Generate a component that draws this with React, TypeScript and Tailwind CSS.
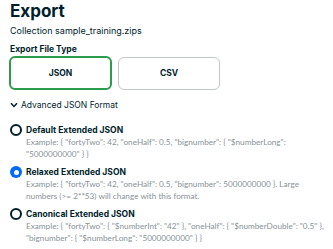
import { useState } from 'react';

type Format = 'default' | 'relaxed' | 'canonical';

const formats: { id: Format; label: string; example: string }[] = [
  {
    id: 'default',
    label: 'Default Extended JSON',
    example: 'Example: { "fortyTwo": 42, "oneHalf": 0.5, "bignumber": { "$numberLong": "5000000000" } }',
  },
  {
    id: 'relaxed',
    label: 'Relaxed Extended JSON',
    example:
      'Example: { "fortyTwo": 42, "oneHalf": 0.5, "bignumber": 5000000000 }. Large numbers (>= 2**53) will change with this format.',
  },
  {
    id: 'canonical',
    label: 'Canonical Extended JSON',
    example:
      'Example: { "fortyTwo": { "$numberInt": "42" }, "oneHalf": { "$numberDouble": "0.5" }, "bignumber": { "$numberLong": "5000000000" } }',
  },
];

const App = () => {
  const [fileType, setFileType] = useState<'json' | 'csv'>('json');
  const [format, setFormat] = useState<Format>('relaxed');

  return (
    <div className="w-[333px] h-[249px] overflow-hidden bg-white text-[#001e2b] font-['Inter',sans-serif] pl-[10px] pr-[5px]">
      {/* Title */}
      <h1 className="text-[17px] font-bold leading-[20px] pt-[1px]">Export</h1>
      <p className="text-[9px] leading-[12px] mt-[4px]">Collection sample_training.zips</p>

      {/* File type */}
      <p className="text-[8.5px] font-bold leading-[12px] mt-[6px]">Export File Type</p>
      <div className="flex gap-[6px] mt-[1px] -ml-[1px]">
        <button
          onClick={() => setFileType('json')}
          className={`w-[103px] h-[34px] rounded-[6px] text-[8.5px] font-bold ${
            fileType === 'json' ? 'border-2 border-[#2d9b4c]' : 'border border-[#c1c7c6]'
          }`}
        >
          JSON
        </button>
        <button
          onClick={() => setFileType('csv')}
          className={`w-[102px] h-[33px] mt-[1px] rounded-[6px] text-[8.5px] font-bold ${
            fileType === 'csv' ? 'border-2 border-[#2d9b4c]' : 'border border-[#c1c7c6]'
          }`}
        >
          CSV
        </button>
      </div>

      {/* Advanced */}
      <div className="flex items-center gap-[3px] mt-[9px] text-[8.5px] leading-[12px]">
        <svg width="8" height="6" viewBox="0 0 8 6" fill="none">
          <path d="M1 1.2 4 4.4 7 1.2" stroke="#001e2b" strokeWidth="1.5" />
        </svg>
        <span>Advanced JSON Format</span>
      </div>

      <div className="flex flex-col gap-[6px] mt-[13px]">
        {formats.map((f) => (
          <label key={f.id} className="flex gap-[4px] cursor-pointer" onClick={() => setFormat(f.id)}>
            <span
              className={`w-[12px] h-[12px] shrink-0 rounded-full flex items-center justify-center ${
                format === f.id ? 'bg-[#016bf8]' : 'border-2 border-[#001e2b]'
              }`}
            >
              {format === f.id && <span className="w-[5px] h-[5px] rounded-full bg-white" />}
            </span>
            <div className="flex flex-col">
              <span className="text-[8.5px] font-bold leading-[12px]">{f.label}</span>
              <span className="text-[8.2px] leading-[12px] text-[#889397] font-['Lato',sans-serif]">{f.example}</span>
            </div>
          </label>
        ))}
      </div>
    </div>
  );
};

export default App;
